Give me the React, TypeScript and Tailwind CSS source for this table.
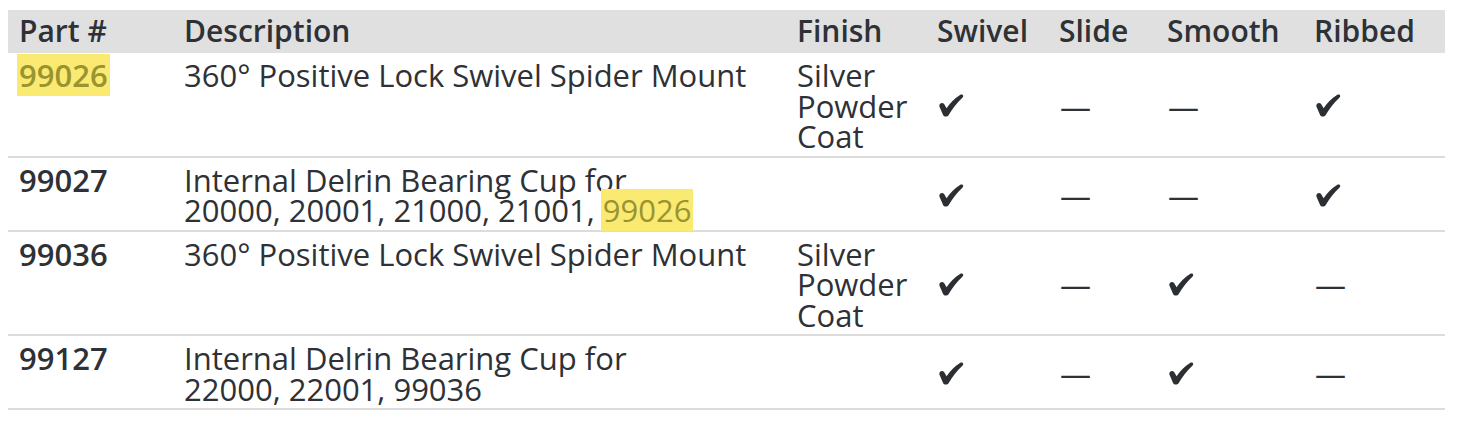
import React from "react";

const Check = () => (
  <svg width="26" height="23" viewBox="0 0 26 23" className="block" aria-hidden="true">
    <path
      d="M1.4 12.6 C0.7 9.9 3.9 7.8 6.1 10 L8.6 14.3 C12 9 16.5 4.2 22 0.9 C24.6 -0.4 26.4 1.8 24.4 3.8 C18.8 9.2 14.3 14.8 10.7 21 C9.5 23 6.1 23.2 5.1 21 Z"
      fill="#2b2e33"
    />
  </svg>
);

const Dash = () => <span className="block leading-[30.5px]">—</span>;

const Hl = ({ children }: { children: React.ReactNode }) => (
  <span className="bg-[#fbea72] text-[#99942f] px-[2px] -mx-[2px]">{children}</span>
);

type Row = {
  part: React.ReactNode;
  desc: React.ReactNode;
  finish: React.ReactNode;
  vals: boolean[];
};

const rows: Row[] = [
  {
    part: <Hl>99026</Hl>,
    desc: <>360° Positive Lock Swivel Spider Mount</>,
    finish: <>Silver Powder Coat</>,
    vals: [true, false, false, true],
  },
  {
    part: <>99027</>,
    desc: (
      <>
        Internal Delrin Bearing Cup for
        <br />
        20000, 20001, 21000, 21001, <Hl>99026</Hl>
      </>
    ),
    finish: <></>,
    vals: [true, false, false, true],
  },
  {
    part: <>99036</>,
    desc: <>360° Positive Lock Swivel Spider Mount</>,
    finish: <>Silver Powder Coat</>,
    vals: [true, false, true, false],
  },
  {
    part: <>99127</>,
    desc: (
      <>
        Internal Delrin Bearing Cup for
        <br />
        22000, 22001, 99036
      </>
    ),
    finish: <></>,
    vals: [true, false, true, false],
  },
];

const cols = "grid grid-cols-[165px_613px_140px_122px_108px_147px_142px]";

export default function App() {
  return (
    <div
      className="w-[1474px] h-[436px] bg-white pl-[8px] pt-[10px] text-[#2e3136]"
      style={{ fontFamily: '"Open Sans", "Noto Sans", sans-serif' }}
    >
      <div className="w-[1437px]">
        <div className={`${cols} h-[43px] items-center bg-[#e0e0e0] text-[30px] leading-[30.5px] font-semibold`}>
          <div className="pl-[11px]">Part #</div>
          <div className="pl-[11px]">Description</div>
          <div className="pl-[11px]">Finish</div>
          <div className="pl-[11px]">Swivel</div>
          <div className="pl-[11px]">Slide</div>
          <div className="pl-[11px]">Smooth</div>
          <div className="pl-[11px]">Ribbed</div>
        </div>
        {rows.map((r, i) => (
          <div
            key={i}
            className={`${cols} border-b-2 border-[#dcdcdc] pt-[7px] pb-[4px] text-[31px] leading-[30.5px]`}
          >
            <div className="pl-[11px] font-semibold">{r.part}</div>
            <div className="pl-[11px]">{r.desc}</div>
            <div className="pl-[11px] pr-[8px]">{r.finish}</div>
            {r.vals.map((v, j) => (
              <div key={j} className="pl-[12px] self-center">
                {v ? <Check /> : <Dash />}
              </div>
            ))}
          </div>
        ))}
      </div>
    </div>
  );
}
